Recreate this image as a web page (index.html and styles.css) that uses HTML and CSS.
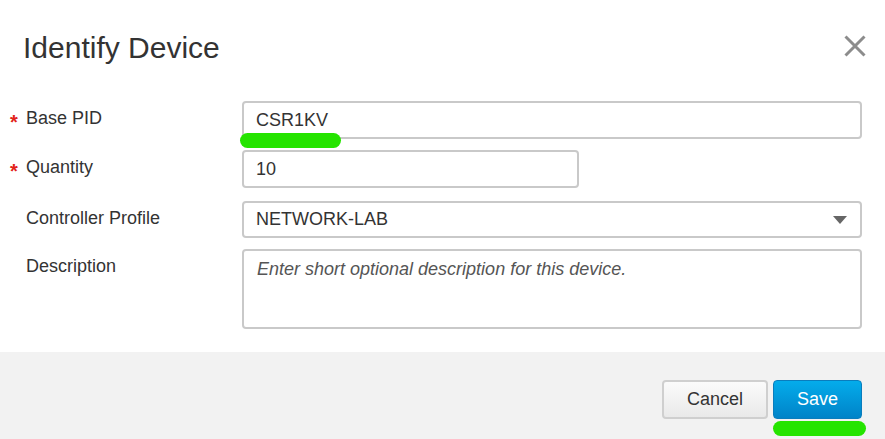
FILE: index.html
```html
<!DOCTYPE html>
<html>
<head>
<meta charset="utf-8">
<link rel="stylesheet" href="styles.css">
</head>
<body>
<div class="dialog">
  <div class="header">
    <div class="title">Identify Device</div>
    <svg class="close" width="22" height="22" viewBox="0 0 22 22"><path d="M1.5 1.5 L20.5 20.5 M20.5 1.5 L1.5 20.5" stroke="#8c8c8c" stroke-width="3" fill="none"/></svg>
  </div>
  <div class="form">
    <div class="row">
      <div class="label"><span class="req">*</span>Base PID</div>
      <div class="field-wrap">
        <div class="field wide">CSR1KV</div>
        <span class="marker marker-pid"></span>
      </div>
    </div>
    <div class="row">
      <div class="label"><span class="req">*</span>Quantity</div>
      <div class="field narrow">10</div>
    </div>
    <div class="row row-select">
      <div class="label"><span class="req"></span>Controller Profile</div>
      <div class="field wide select">NETWORK-LAB<span class="caret"></span></div>
    </div>
    <div class="row">
      <div class="label"><span class="req"></span>Description</div>
      <div class="field wide textarea"><span class="placeholder">Enter short optional description for this device.</span></div>
    </div>
  </div>
  <div class="footer">
    <div class="btn cancel">Cancel</div>
    <div class="btn-wrap">
      <div class="btn save">Save</div>
      <span class="marker marker-save"></span>
    </div>
  </div>
</div>
</body>
</html>
```
FILE: styles.css
```css
* { box-sizing: border-box; }
html, body { margin: 0; padding: 0; background: #fff; }
body {
  font-family: "Liberation Sans", Arial, sans-serif;
  color: #333;
}
.dialog {
  width: 885px;
  height: 439px;
  display: flex;
  flex-direction: column;
}
.header {
  display: flex;
  justify-content: space-between;
  align-items: center;
  padding: 30px 19px 0 23px;
}
.title {
  font-size: 30px;
  line-height: 36px;
  color: #333;
}
.close { display: block; margin-top: -5px; }
.form {
  display: flex;
  flex-direction: column;
  gap: 11px;
  padding: 35px 23px 0 10px;
}
.row {
  display: flex;
  align-items: flex-start;
}
.row-select { margin-top: 2px; }
.label {
  width: 232px;
  flex: none;
  display: flex;
  font-size: 18px;
  line-height: 20px;
  padding-top: 7px;
  color: #333;
}
.req {
  width: 16px;
  flex: none;
  color: #e2231a;
  font-weight: bold;
  font-size: 20px;
  position: relative;
  top: 4px;
}
.field-wrap { position: relative; flex: 1; display: flex; }
.field {
  height: 38px;
  border: 2px solid #c9c9c9;
  border-radius: 4px;
  padding: 0 12px;
  font-size: 18px;
  line-height: 34px;
  color: #333;
  background: #fff;
}
.wide { flex: 1; }
.narrow { width: 337px; }
.select {
  height: 37px;
  line-height: 33px;
  display: flex;
  justify-content: space-between;
  align-items: center;
  padding-right: 13px;
}
.caret {
  width: 0;
  height: 0;
  border-left: 7px solid transparent;
  border-right: 7px solid transparent;
  border-top: 8px solid #666;
}
.textarea {
  height: 80px;
  line-height: 20px;
  padding-top: 8px;
  padding-left: 13px;
}
.placeholder {
  font-style: italic;
  color: #555;
  font-size: 18px;
}
.marker {
  position: absolute;
  background: #25e400;
  border-radius: 8px;
  height: 15px;
}
.marker-pid { left: -2px; top: 32px; width: 101px; }
.footer {
  margin-top: auto;
  height: 87px;
  background: #f2f2f2;
  display: flex;
  justify-content: flex-end;
  align-items: flex-start;
  gap: 5px;
  padding: 28px 23px 0 0;
}
.btn {
  height: 39px;
  border-radius: 4px;
  font-size: 18px;
  line-height: 35px;
  text-align: center;
}
.cancel {
  width: 106px;
  border: 2px solid #cfcfcf;
  background: linear-gradient(#fbfbfb, #e9e9e9);
  color: #333;
}
.btn-wrap { position: relative; }
.save {
  width: 89px;
  border: 1px solid #0a7dbd;
  line-height: 37px;
  background: linear-gradient(#04aceb, #0083c8);
  color: #fff;
}
.marker-save { left: 0; top: 41px; width: 93px; }
```
